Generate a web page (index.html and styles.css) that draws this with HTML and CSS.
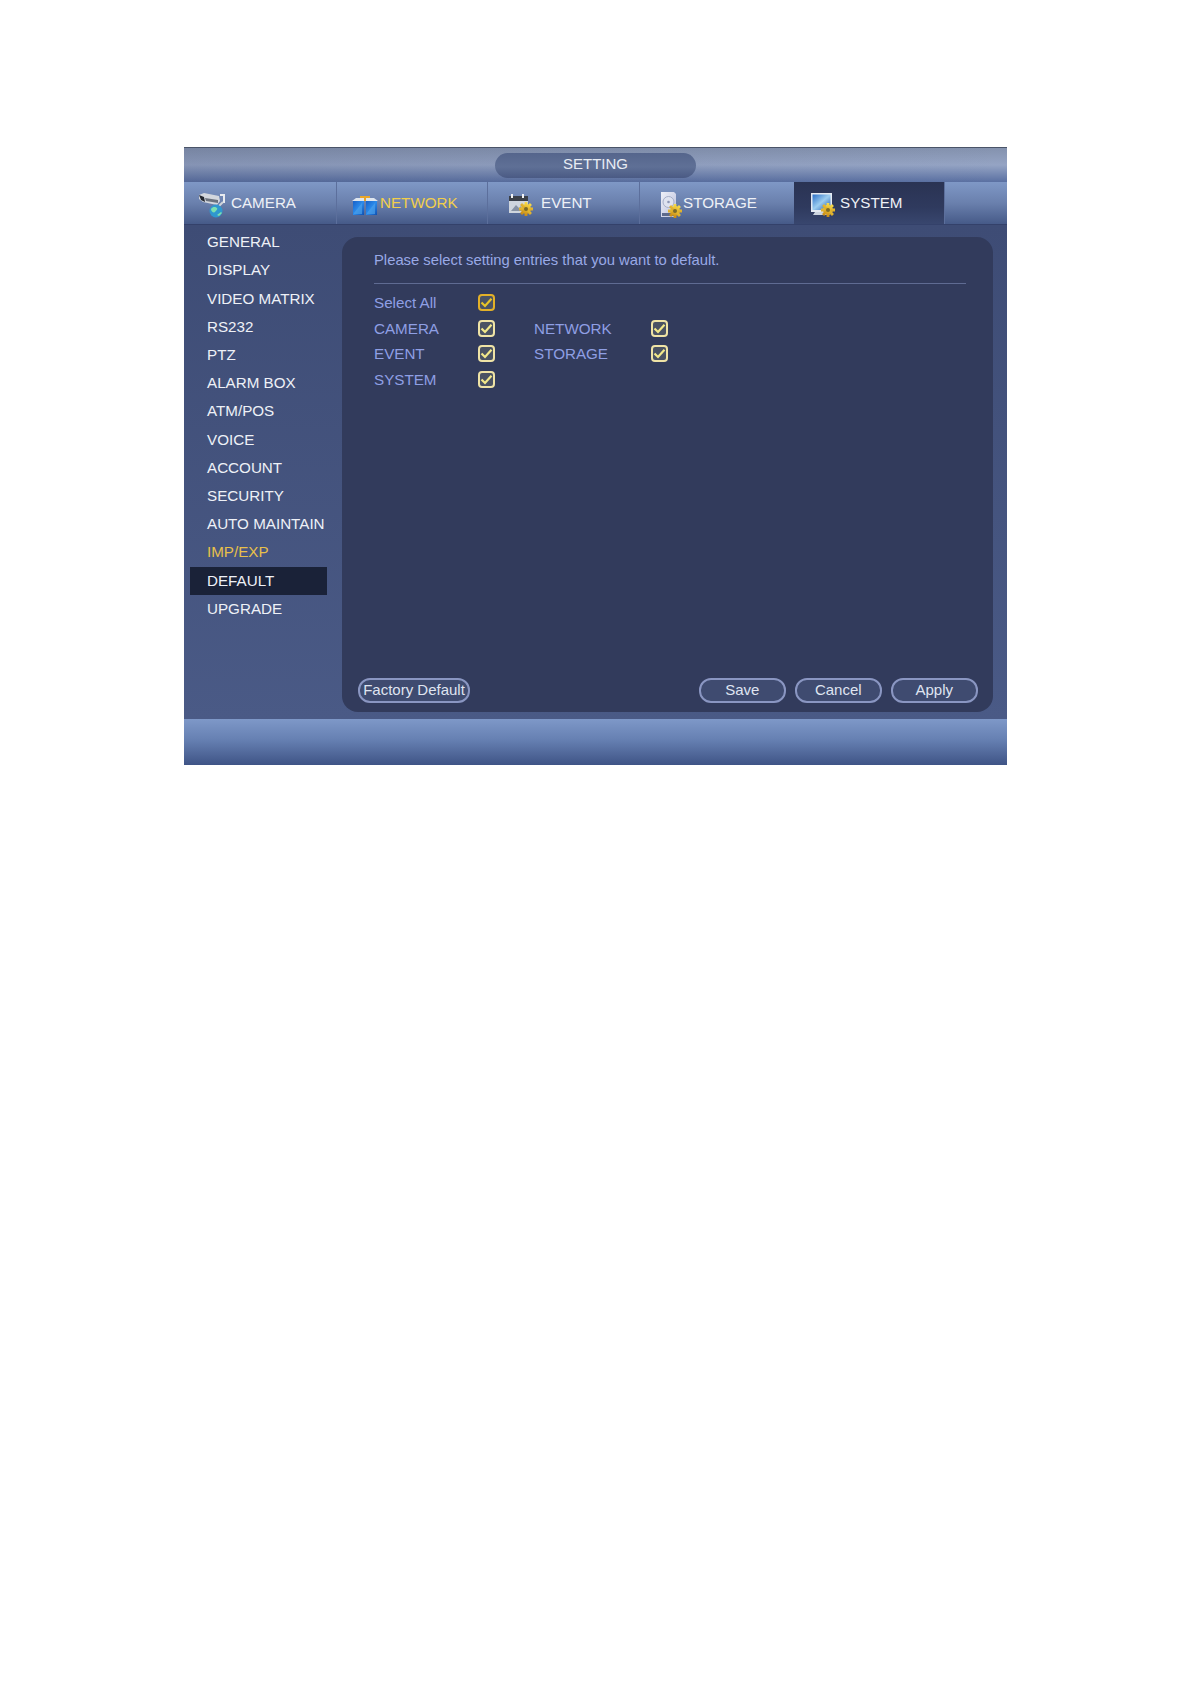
FILE: index.html
```html
<!DOCTYPE html>
<html lang="en">
<head>
    <meta charset="UTF-8">
    <title>Setting - Default</title>
    <link rel="stylesheet" href="styles.css">
</head>
<body>

    <svg class="defs" width="0" height="0">
        <defs>
            <linearGradient id="gearFill" x1="0" y1="0" x2="0" y2="1">
                <stop offset="0" stop-color="#f8dc4a"/>
                <stop offset="1" stop-color="#c98a12"/>
            </linearGradient>
            <linearGradient id="screenFill" x1="0" y1="0" x2="1" y2="1">
                <stop offset="0" stop-color="#2a6fc8"/>
                <stop offset="0.5" stop-color="#9ccdf0"/>
                <stop offset="1" stop-color="#1c55ad"/>
            </linearGradient>
            <linearGradient id="paneFill" x1="0" y1="0" x2="1" y2="1">
                <stop offset="0" stop-color="#1660c8"/>
                <stop offset="0.5" stop-color="#2c8cec"/>
                <stop offset="1" stop-color="#0f4fb0"/>
            </linearGradient>
            <linearGradient id="diskFill" x1="0" y1="0" x2="1" y2="1">
                <stop offset="0" stop-color="#eef0f8"/>
                <stop offset="1" stop-color="#b9bfdc"/>
            </linearGradient>
            <g id="gear">
                <circle cx="0" cy="0" r="5" fill="url(#gearFill)"/>
                <path d="M-1.4 -7h2.8v14h-2.8zM-7 -1.4h14v2.8h-14z" fill="url(#gearFill)"/>
                <path d="M-1.4 -7h2.8v14h-2.8zM-7 -1.4h14v2.8h-14z" fill="url(#gearFill)" transform="rotate(45)"/>
                <circle cx="0" cy="0" r="2" fill="#7a6a2a"/>
            </g>
        </defs>
    </svg>

    <div class="frame">
        <div class="title-bar">
            <div class="title-pill">SETTING</div>
        </div>

        <div class="tabs">
            <div class="tab tab-camera">
                <svg class="tab-icon" width="28" height="26" viewBox="0 0 28 26">
                    <path d="M1 3l5-2 15 3 1 5-3 4-14-3-4-3z" fill="#d3d7de"/>
                    <path d="M1 3l5 2 1 5-4-2z" fill="#23272f"/>
                    <path d="M7 6l13 2 0 3-12-2z" fill="#6a717d"/>
                    <path d="M22 2h5v9h-2v-7h-3z" fill="#e8ebef"/>
                    <path d="M25 10l-5 5" stroke="#cfd4da" stroke-width="2" fill="none"/>
                    <circle cx="18" cy="19" r="6.5" fill="#2f97cf"/>
                    <path d="M13 17c2-3 5-2 6-1s-1 3-2 4-4 0-4-3zM19 23l4-3 1 1-3 3z" fill="#7ce0b0"/>
                </svg>
                <span class="tab-label">CAMERA</span>
            </div>
            <div class="tab tab-network">
                <svg class="tab-icon" width="26" height="22" viewBox="0 0 26 22">
                    <path d="M1 7h11v14H1z" fill="url(#paneFill)"/>
                    <path d="M14 7h11v14H14z" fill="url(#paneFill)"/>
                    <path d="M0 7l4-3h18l4 3z" fill="#dfe6ee"/>
                    <path d="M2 19l8-10v11H2zM15 19l8-10v11h-8z" fill="#4aa0ea" opacity="0.7"/>
                    <path d="M8 2h10v2h-4v3h-2V4H8z" fill="#e9a62a"/>
                </svg>
                <span class="tab-label">NETWORK</span>
            </div>
            <div class="tab tab-event">
                <svg class="tab-icon" width="26" height="24" viewBox="0 0 26 24">
                    <rect x="1" y="3" width="19" height="17" fill="#cfd5dd"/>
                    <rect x="1" y="3" width="19" height="5" fill="#3a3f48"/>
                    <path d="M3 1h2v4H3zM14 1h2v4h-2z" fill="#f1f3f5"/>
                    <path d="M3 18l5-6 3 3 2-2 3 5z" fill="#8792a4"/>
                    <use href="#gear" x="18" y="16"/>
                </svg>
                <span class="tab-label">EVENT</span>
            </div>
            <div class="tab tab-storage">
                <svg class="tab-icon" width="24" height="26" viewBox="0 0 24 26">
                    <path d="M1 0h13l2 2v23H1z" fill="url(#diskFill)"/>
                    <circle cx="8.5" cy="10" r="5.5" fill="#dfe3f0" stroke="#a5aec8"/>
                    <circle cx="8.5" cy="10" r="1.3" fill="#8d97b6"/>
                    <rect x="2" y="21" width="12" height="3" fill="#5d6a8c"/>
                    <use href="#gear" x="15" y="19"/>
                </svg>
                <span class="tab-label">STORAGE</span>
            </div>
            <div class="tab tab-system active">
                <svg class="tab-icon" width="26" height="25" viewBox="0 0 26 25">
                    <rect x="0" y="0" width="21" height="19" fill="#e4eaf2"/>
                    <rect x="1.5" y="1.5" width="18" height="15.5" fill="url(#screenFill)"/>
                    <path d="M4 19h13l2 3H2z" fill="#cdd5e0"/>
                    <use href="#gear" x="17" y="17"/>
                </svg>
                <span class="tab-label">SYSTEM</span>
            </div>
            <div class="tab-rest"></div>
        </div>

        <div class="main">
            <ul class="side-menu">
                <li>GENERAL</li>
                <li>DISPLAY</li>
                <li>VIDEO MATRIX</li>
                <li>RS232</li>
                <li>PTZ</li>
                <li>ALARM BOX</li>
                <li>ATM/POS</li>
                <li>VOICE</li>
                <li>ACCOUNT</li>
                <li>SECURITY</li>
                <li>AUTO MAINTAIN</li>
                <li class="hover">IMP/EXP</li>
                <li class="selected">DEFAULT</li>
                <li>UPGRADE</li>
            </ul>

            <div class="panel">
                <div class="hint">Please select setting entries that you want to default.</div>
                <div class="options">
                    <span class="opt-label">Select All</span>
                    <span class="check focus"><svg viewBox="0 0 17 17"><path d="M3.5 8.5l3.5 3.5L13.5 4.8"/></svg></span>
                    <span></span><span></span>

                    <span class="opt-label">CAMERA</span>
                    <span class="check"><svg viewBox="0 0 17 17"><path d="M3.5 8.5l3.5 3.5L13.5 4.8"/></svg></span>
                    <span class="opt-label">NETWORK</span>
                    <span class="check"><svg viewBox="0 0 17 17"><path d="M3.5 8.5l3.5 3.5L13.5 4.8"/></svg></span>

                    <span class="opt-label">EVENT</span>
                    <span class="check"><svg viewBox="0 0 17 17"><path d="M3.5 8.5l3.5 3.5L13.5 4.8"/></svg></span>
                    <span class="opt-label">STORAGE</span>
                    <span class="check"><svg viewBox="0 0 17 17"><path d="M3.5 8.5l3.5 3.5L13.5 4.8"/></svg></span>

                    <span class="opt-label">SYSTEM</span>
                    <span class="check"><svg viewBox="0 0 17 17"><path d="M3.5 8.5l3.5 3.5L13.5 4.8"/></svg></span>
                </div>
                <div class="actions">
                    <button class="btn btn-factory">Factory Default</button>
                    <div class="actions-right">
                        <button class="btn">Save</button>
                        <button class="btn">Cancel</button>
                        <button class="btn">Apply</button>
                    </div>
                </div>
            </div>
        </div>

        <div class="footer"></div>
    </div>

</body>
</html>
```

FILE: styles.css
```css
body {
    margin: 0;
    padding: 147px 0 0 184px;
    height: 1537px;
    overflow: hidden;
    background-color: #fff;
    font-family: "Liberation Sans", Arial, sans-serif;
}

.defs {
    display: block;
    height: 0;
}

.frame {
    width: 823px;
    height: 618px;
    display: flex;
    flex-direction: column;
    background-color: #46557f;
    box-shadow: inset 1px 0 0 #5a6880;
}

.title-bar {
    height: 35px;
    display: flex;
    justify-content: center;
    align-items: center;
    border-top: 1px solid #4a5468;
    box-sizing: border-box;
    background:
        linear-gradient(to right, rgba(40, 50, 85, 0.14) 0%, rgba(40, 50, 85, 0) 100%),
        linear-gradient(to bottom, #8492ae 0%, #95a4c4 50%, #5a70a2 100%);
}

.title-pill {
    width: 201px;
    height: 25px;
    line-height: 22px;
    border-radius: 13px;
    text-align: center;
    font-size: 15px;
    color: #e8ecf4;
    background: linear-gradient(to bottom, #55658c 0%, #5f7096 55%, #4a5a84 100%);
    margin-top: 1px;
}

.tabs {
    height: 43px;
    display: flex;
    background: linear-gradient(to bottom, #7f98c6 0%, #6a80ad 50%, #465a88 100%);
    border-bottom: 1px solid #34416a;
    box-sizing: border-box;
}

.tab {
    width: 152px;
    display: flex;
    align-items: center;
    padding-bottom: 2px;
    font-size: 15.2px;
    color: #eef1f7;
    box-sizing: border-box;
    border-right: 1px solid #5c6f9c;
}

.tab-camera { width: 153px; padding-left: 14px; }
.tab-network { width: 151px; padding-left: 15px; color: #f2cf4b; }
.tab-event { padding-left: 20px; }
.tab-storage { width: 154px; padding-left: 20px; border-right: none; }
.tab-system { width: 150px; padding-left: 17px; border-right: none; }

.tab-camera .tab-label { margin-left: 5px; }
.tab-network .tab-label { margin-left: 2px; }
.tab-event .tab-label { margin-left: 7px; }
.tab-storage .tab-label { margin-left: -1px; }
.tab-system .tab-label { margin-left: 3px; }

.tab.active {
    background: linear-gradient(to bottom, #2a3353 0%, #2f3a5e 60%, #38466e 100%);
}

.tab-rest {
    flex: 1;
    border-left: 1px solid #5c6f9c;
}

.tab-icon {
    flex-shrink: 0;
    margin-top: 6px;
}

.main {
    flex: 1;
    display: flex;
    background: linear-gradient(to bottom, #3e4c75 0%, #4a5a86 100%);
}

.side-menu {
    list-style: none;
    margin: 0;
    padding: 3.3px 0 0 6px;
    width: 158px;
    box-sizing: border-box;
    flex-shrink: 0;
}

.side-menu li {
    width: 137px;
    height: 28.2px;
    line-height: 28.2px;
    padding-left: 17px;
    box-sizing: border-box;
    font-size: 15.2px;
    color: #eef1f7;
    white-space: nowrap;
}

.side-menu .hover {
    color: #e8c04a;
}

.side-menu .selected {
    background-color: #1a2238;
}

.panel {
    width: 651px;
    height: 475px;
    margin-top: 12px;
    box-sizing: border-box;
    padding: 13px 15px 9px 32px;
    display: flex;
    flex-direction: column;
    border-radius: 16px;
    background-color: #323b5c;
}

.hint {
    height: 34px;
    line-height: 20px;
    font-size: 14.8px;
    color: #99a9e6;
    border-bottom: 1px solid #5f6b92;
    width: 592px;
    box-sizing: border-box;
}

.options {
    display: grid;
    grid-template-columns: 104px 56px 117px 17px;
    grid-auto-rows: 25.6px;
    align-items: center;
    margin-top: 6px;
    font-size: 15.2px;
    color: #8f9fe4;
}

.check {
    width: 17px;
    height: 17px;
    box-sizing: border-box;
    border: 2px solid #efe3a6;
    border-radius: 4px;
    background-color: #4a5263;
    display: block;
}

.check.focus {
    border-color: #e3b028;
}

.check svg {
    display: block;
    width: 17px;
    height: 17px;
    margin: -2px;
}

.check path {
    fill: none;
    stroke: #f2e88a;
    stroke-width: 2.2;
}

.check.focus path {
    stroke: #e8c428;
}

.actions {
    margin-top: auto;
    display: flex;
    justify-content: space-between;
    margin-left: -16px;
}

.actions-right {
    display: flex;
    gap: 8.5px;
}

.btn {
    width: 87.5px;
    height: 25px;
    padding: 0 0 2px;
    border: 2px solid #8a96c2;
    border-radius: 12px;
    background-color: #3f4b70;
    color: #dfe4f0;
    font-family: "Liberation Sans", Arial, sans-serif;
    font-size: 15px;
    line-height: 19px;
}

.btn-factory {
    width: 112px;
}

.footer {
    height: 46px;
    background: linear-gradient(to bottom, #7e98c8 0%, #6680b2 45%, #3f5486 100%);
}
```
